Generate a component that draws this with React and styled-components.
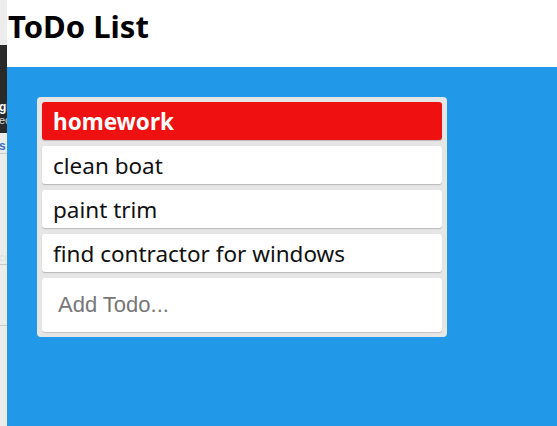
import styled, { createGlobalStyle } from "styled-components";

const GlobalStyle = createGlobalStyle`
  html, body {
    margin: 0;
    height: 100%;
  }
  body {
    font-family: "Noto Sans", "Open Sans", sans-serif;
    overflow: hidden;
  }
  #root {
    height: 100%;
  }
`;

const todos = [
  { text: "homework", active: true },
  { text: "clean boat" },
  { text: "paint trim" },
  { text: "find contractor for windows" },
];

export default function App() {
  return (
    <Screen>
      <GlobalStyle />
      <BehindWindow>
        <LightBand $h={45} />
        <DarkBand>
          <Frag>gi</Frag>
          <Frag $small>ec</Frag>
        </DarkBand>
        <LightBand $h={20}>
          <Frag $blue>s</Frag>
        </LightBand>
        <LightBand $h={110} $line>
          <Frag $small>cc</Frag>
        </LightBand>
        <LightBand $h={60} $line />
        <LightBand $grow $line />
      </BehindWindow>
      <Page>
        <Header>
          <Title>ToDo List</Title>
        </Header>
        <Board>
          <Card>
            {todos.map((t) => (
              <Item key={t.text} $active={t.active}>
                {t.text}
              </Item>
            ))}
            <AddInput placeholder="Add Todo..." />
          </Card>
        </Board>
      </Page>
    </Screen>
  );
}

const Screen = styled.div`
  display: flex;
  height: 100%;
`;

const BehindWindow = styled.div`
  width: 7px;
  flex-shrink: 0;
  display: flex;
  flex-direction: column;
  overflow: hidden;
  box-shadow: inset -2px 0 2px rgba(0, 0, 0, 0.25);
  background: #e8e8e8;
`;

const LightBand = styled.div`
  height: ${(p) => (p.$grow ? "auto" : `${p.$h}px`)};
  flex: ${(p) => (p.$grow ? 1 : "none")};
  background: #ececec;
  border-top: ${(p) => (p.$line ? "1px solid #c8c8c8" : "none")};
  display: flex;
  align-items: flex-end;
`;

const DarkBand = styled.div`
  height: 88px;
  background: #2a2a2a;
  display: flex;
  flex-direction: column;
  justify-content: flex-end;
  padding-bottom: 6px;
  box-sizing: border-box;
`;

const Frag = styled.span`
  font-family: "Liberation Sans", sans-serif;
  font-size: ${(p) => (p.$small ? 11 : 12)}px;
  line-height: 13px;
  font-weight: ${(p) => (p.$small ? 400 : 700)};
  color: ${(p) => (p.$blue ? "#3a6fc4" : p.$small ? "#ddd" : "#fff")};
  margin-left: -1px;
  white-space: nowrap;
`;

const Page = styled.div`
  flex: 1;
  display: flex;
  flex-direction: column;
`;

const Header = styled.header`
  height: 67px;
  background: #fff;
  padding-left: 1px;
  box-sizing: border-box;
`;

const Title = styled.h1`
  margin: 0;
  padding-top: 4px;
  font-size: 31px;
  line-height: 44px;
  font-weight: 700;
  color: #000;
`;

const Board = styled.main`
  flex: 1;
  background: #2199e8;
  padding: 30px;
`;

const Card = styled.div`
  width: 400px;
  padding: 5px;
  background: #e6e6e6;
  border-radius: 4px;
  display: flex;
  flex-direction: column;
  gap: 6px;
`;

const Item = styled.div`
  height: 38px;
  padding-left: 11px;
  display: flex;
  align-items: center;
  border-radius: 3px;
  font-size: 22.5px;
  font-weight: ${(p) => (p.$active ? 700 : 400)};
  color: ${(p) => (p.$active ? "#fff" : "#111")};
  background: ${(p) => (p.$active ? "#ef1111" : "#fff")};
  box-shadow: 0 1px 1px rgba(0, 0, 0, 0.2);
`;

const AddInput = styled.input`
  height: 54px;
  border: none;
  border-radius: 3px;
  padding: 0 16px;
  font-family: "Liberation Sans", Arial, sans-serif;
  font-size: 22px;
  background: #fff;
  outline: none;
  box-shadow: 0 1px 1px rgba(0, 0, 0, 0.15);

  &::placeholder {
    color: #777;
  }
`;
